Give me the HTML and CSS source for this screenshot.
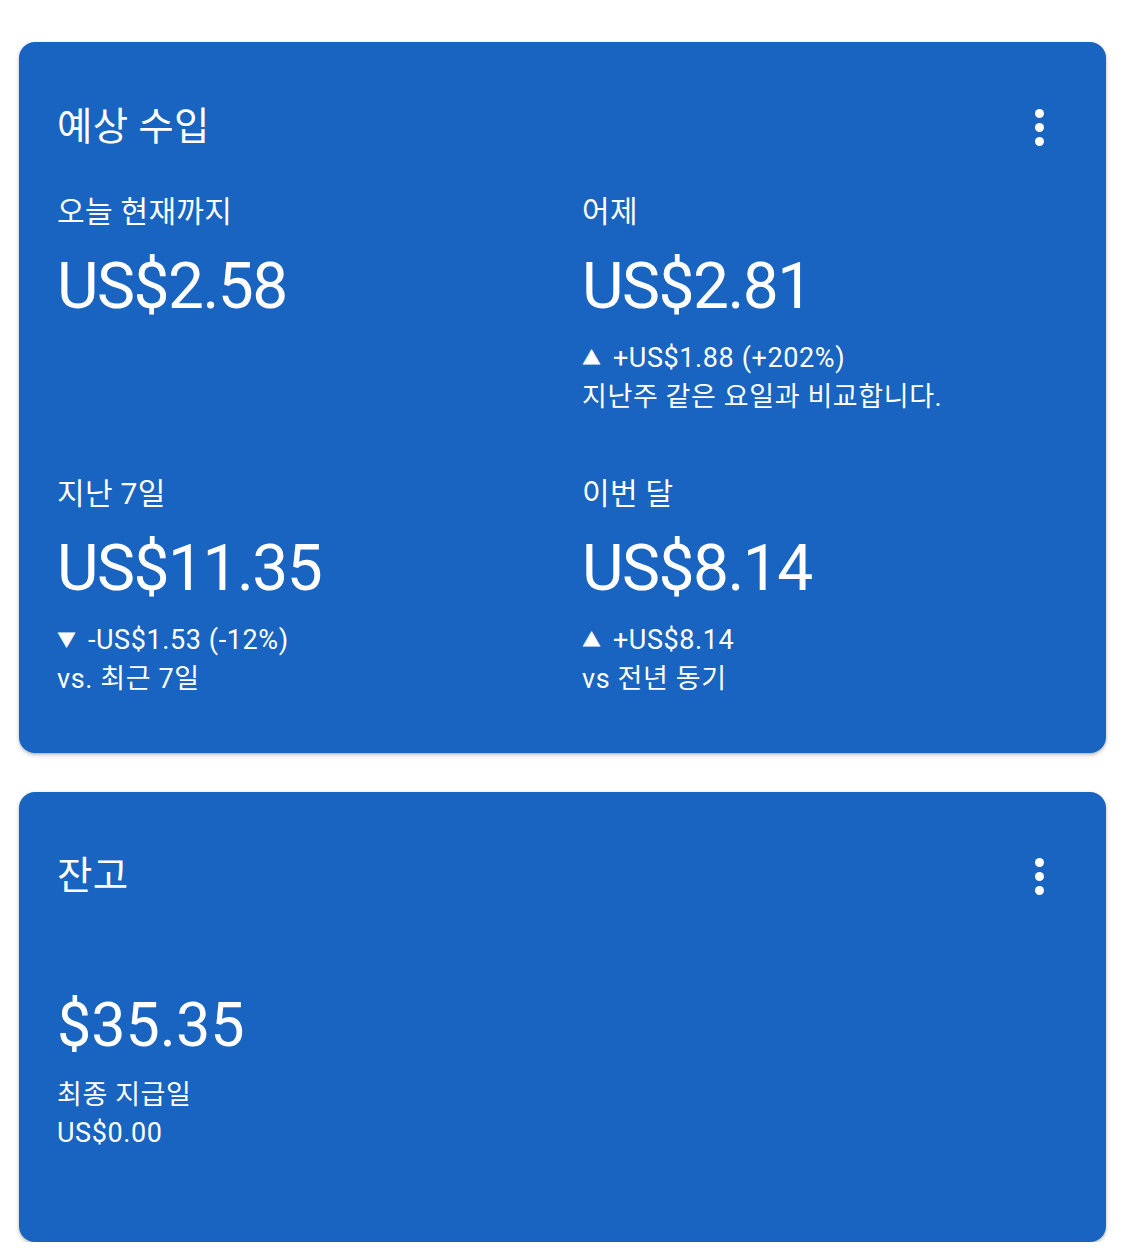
FILE: index.html
```html
<!DOCTYPE html>
<html lang="ko">
<head>
<meta charset="utf-8">
<link rel="stylesheet" href="styles.css">
</head>
<body>
<main class="page">
  <section class="card card-earnings">
    <header class="card-head">
      <h2 class="card-title">예상 수입</h2>
      <button class="more" aria-label="더보기"><span></span><span></span><span></span></button>
    </header>
    <div class="grid">
      <div class="stat">
        <div class="label">오늘 현재까지</div>
        <div class="amount">US$2.58</div>
      </div>
      <div class="stat">
        <div class="label">어제</div>
        <div class="amount">US$2.81</div>
        <div class="sub"><span class="arrow">▲</span> +US$1.88 (+202%)</div>
        <div class="sub">지난주 같은 요일과 비교합니다.</div>
      </div>
      <div class="stat">
        <div class="label">지난 7일</div>
        <div class="amount">US$11.35</div>
        <div class="sub"><span class="arrow">▼</span> -US$1.53 (-12%)</div>
        <div class="sub">vs. 최근 7일</div>
      </div>
      <div class="stat">
        <div class="label">이번 달</div>
        <div class="amount">US$8.14</div>
        <div class="sub"><span class="arrow">▲</span> +US$8.14</div>
        <div class="sub">vs 전년 동기</div>
      </div>
    </div>
  </section>

  <section class="card card-balance">
    <header class="card-head">
      <h2 class="card-title">잔고</h2>
      <button class="more" aria-label="더보기"><span></span><span></span><span></span></button>
    </header>
    <div class="balance">
      <div class="amount amount-balance">$35.35</div>
      <div class="sub">최종 지급일</div>
      <div class="sub">US$0.00</div>
    </div>
  </section>
</main>
</body>
</html>
```

FILE: styles.css
```css
* { box-sizing: border-box; }

html, body {
  margin: 0;
  padding: 0;
  background: #ffffff;
}

body {
  font-family: Roboto, "Noto Sans CJK KR", "Noto Sans", sans-serif;
  color: #ffffff;
}

.page {
  display: flex;
  flex-direction: column;
  gap: 39px;
  padding: 42px 19px 0 19px;
}

.card {
  background: #1864c0;
  border-radius: 16px;
  box-shadow: 0 2px 4px rgba(0, 0, 0, 0.22), 0 1px 2px rgba(0, 0, 0, 0.12);
  padding: 0 38px;
}

.card-earnings {
  padding-top: 61px;
  padding-bottom: 55px;
}

.card-balance {
  padding-top: 60px;
  padding-bottom: 90px;
}

.card-head {
  display: flex;
  align-items: center;
  justify-content: space-between;
  height: 48px;
}

.card-title {
  margin: 0;
  font-size: 38.5px;
  font-weight: 400;
  line-height: 48px;
  letter-spacing: 0.3px;
}

.more {
  display: flex;
  flex-direction: column;
  align-items: center;
  gap: 5px;
  background: none;
  border: 0;
  padding: 0;
  margin-right: 24px;
  margin-top: 0;
}

.more span {
  width: 9px;
  height: 9px;
  border-radius: 50%;
  background: #ffffff;
}

.grid {
  display: grid;
  grid-template-columns: 525px 1fr;
  row-gap: 59px;
  margin-top: 42px;
}

.label {
  font-size: 30px;
  line-height: 38px;
  letter-spacing: 0.3px;
}

.amount {
  font-size: 64px;
  line-height: 80px;
  margin-top: 16px;
  margin-bottom: 12px;
  letter-spacing: -1.5px;
}

.sub {
  font-size: 27px;
  line-height: 38px;
  letter-spacing: 0.6px;
}

.arrow {
  font-size: 19px;
  display: inline-block;
  vertical-align: 2px;
  margin-right: 4px;
}

.balance {
  margin-top: 85px;
}

.amount-balance {
  font-size: 61px;
  margin-top: 0;
  margin-bottom: 11px;
  letter-spacing: 0;
}
```
